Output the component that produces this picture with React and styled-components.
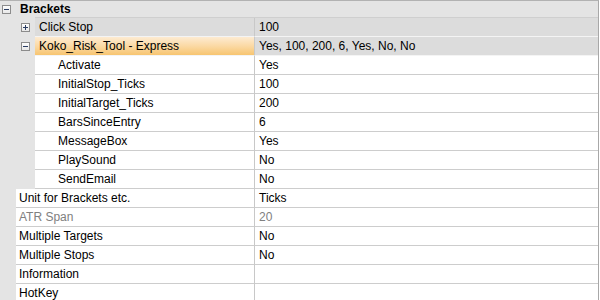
import React from "react";
import styled, { createGlobalStyle, css } from "styled-components";

const Global = createGlobalStyle`
  html, body { margin: 0; padding: 0; background: #ffffff; }
  body { font-family: "Liberation Sans", Arial, sans-serif; font-size: 12px; color: #000; }
`;

const Grid = styled.div`
  width: 599px;
  height: 300px;
  overflow: hidden;
  box-sizing: border-box;
  border-top: 1px solid #b2b2b2;
  border-right: 1px solid #a8a8a8;
  background: #e4e4e4;
`;

const GroupRow = styled.div`
  position: relative;
  display: flex;
  align-items: center;
  height: 17px;
  box-sizing: border-box;
  background: #e4e4e4;
  &::after {
    content: "";
    position: absolute;
    left: 35px;
    right: 0;
    bottom: 0;
    height: 1px;
    background: #cfcfcf;
  }
`;

const GroupTitle = styled.span`
  font-weight: bold;
  margin-left: 9px;
  line-height: 16px;
  padding-bottom: 1px;
`;

const ToggleBox = styled.span`
  display: inline-flex;
  width: 9px;
  height: 9px;
  margin-left: ${(p) => p.$offset}px;
  flex: 0 0 auto;
`;

const Row = styled.div`
  display: flex;
  height: 19px;
`;

const Gutter = styled.div`
  flex: 0 0 ${(p) => p.$width}px;
  display: flex;
  align-items: center;
  background: #e4e4e4;
`;

const toneStyles = {
  gray: css`
    background: #dcdcdc;
    border-bottom-color: #f4f4f4;
  `,
  selected: css`
    background: linear-gradient(#fdebd2 0%, #fbd9a4 50%, #f7c571 100%);
    border-bottom-color: #f4f4f4;
  `,
  white: css`
    background: #ffffff;
    border-bottom-color: #cdcdcd;
  `,
};

const LabelCell = styled.div`
  flex: 0 0 ${(p) => 255 - p.$start}px;
  box-sizing: border-box;
  display: flex;
  align-items: center;
  padding-left: ${(p) => p.$pad}px;
  border-bottom: 1px solid;
  border-right: 1px solid #c8c8c8;
  white-space: nowrap;
  overflow: hidden;
  color: ${(p) => (p.$disabled ? "#808080" : "#000")};
  ${(p) => toneStyles[p.$tone]}
`;

const ValueCell = styled.div`
  flex: 1 1 auto;
  box-sizing: border-box;
  display: flex;
  align-items: center;
  padding-left: 4px;
  border-bottom: 1px solid;
  white-space: nowrap;
  overflow: hidden;
  color: ${(p) => (p.$disabled ? "#808080" : "#000")};
  ${(p) => toneStyles[p.$tone]}
`;

function Toggle({ open, offset }) {
  return (
    <ToggleBox $offset={offset}>
      <svg width="9" height="9" viewBox="0 0 9 9">
        <defs>
          <linearGradient id="tg" x1="0" y1="0" x2="0" y2="1">
            <stop offset="0" stopColor="#ffffff" />
            <stop offset="1" stopColor="#e6e6e6" />
          </linearGradient>
        </defs>
        <rect x="0.5" y="0.5" width="8" height="8" fill="url(#tg)" stroke="#8c8c8c" />
        <rect x="2" y="4" width="5" height="1" fill="#2b3d63" />
        {!open && <rect x="4" y="2" width="1" height="5" fill="#2b3d63" />}
      </svg>
    </ToggleBox>
  );
}

const rows = [
  { level: 1, label: "Click Stop", value: "100", toggle: "plus", tone: "gray" },
  {
    level: 1,
    label: "Koko_Risk_Tool - Express",
    value: "Yes, 100, 200, 6, Yes, No, No",
    toggle: "minus",
    tone: "selected",
    valueTone: "gray",
  },
  { level: 2, label: "Activate", value: "Yes" },
  { level: 2, label: "InitialStop_Ticks", value: "100" },
  { level: 2, label: "InitialTarget_Ticks", value: "200" },
  { level: 2, label: "BarsSinceEntry", value: "6" },
  { level: 2, label: "MessageBox", value: "Yes" },
  { level: 2, label: "PlaySound", value: "No" },
  { level: 2, label: "SendEmail", value: "No" },
  { level: 0, label: "Unit for Brackets etc.", value: "Ticks" },
  { level: 0, label: "ATR Span", value: "20", disabled: true },
  { level: 0, label: "Multiple Targets", value: "No" },
  { level: 0, label: "Multiple Stops", value: "No" },
  { level: 0, label: "Information", value: "" },
  { level: 0, label: "HotKey", value: "" },
];

const gutterFor = { 0: 16, 1: 35, 2: 35 };
const padFor = { 0: 3, 1: 4, 2: 23 };

export default function App() {
  return (
    <>
      <Global />
      <Grid>
        <GroupRow>
          <Toggle open offset={2} />
          <GroupTitle>Brackets</GroupTitle>
        </GroupRow>
        {rows.map((r) => {
          const g = gutterFor[r.level];
          const tone = r.tone || "white";
          return (
            <Row key={r.label}>
              <Gutter $width={g}>
                {r.toggle && <Toggle open={r.toggle === "minus"} offset={21} />}
              </Gutter>
              <LabelCell $start={g} $pad={padFor[r.level]} $tone={tone} $disabled={r.disabled}>
                {r.label}
              </LabelCell>
              <ValueCell $tone={r.valueTone || tone} $disabled={r.disabled}>
                {r.value}
              </ValueCell>
            </Row>
          );
        })}
      </Grid>
    </>
  );
}
